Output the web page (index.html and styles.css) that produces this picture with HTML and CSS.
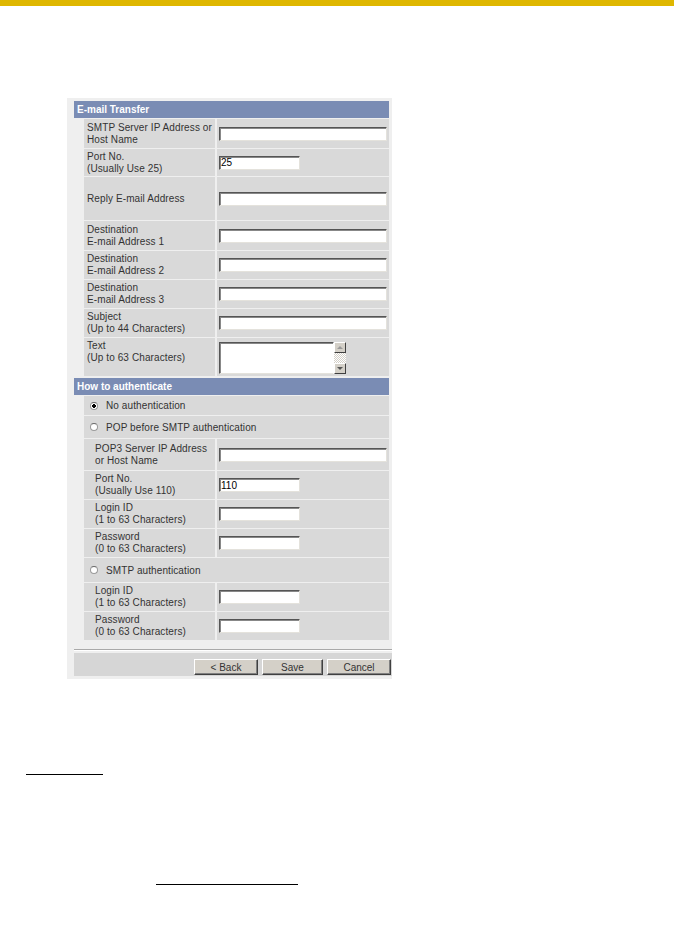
FILE: index.html
```html
<!DOCTYPE html>
<html lang="en">
<head>
  <meta charset="UTF-8" />
  <title>E-mail Transfer</title>
  <link rel="stylesheet" href="styles.css">
</head>
<body>

  <div class="topbar"></div>

  <div class="panel">
    <div class="head">E-mail Transfer</div>
    <div class="rows">
      <div class="row h29"><div class="label">SMTP Server IP Address or<br>Host Name</div><div class="field"><input type="text" class="long" /></div></div>
      <div class="row h27"><div class="label">Port No.<br>(Usually Use 25)</div><div class="field"><input type="text" class="short" value="25" /></div></div>
      <div class="row h43"><div class="label">Reply E-mail Address</div><div class="field"><input type="text" class="long" /></div></div>
      <div class="row h29"><div class="label">Destination<br>E-mail Address 1</div><div class="field"><input type="text" class="long" /></div></div>
      <div class="row"><div class="label">Destination<br>E-mail Address 2</div><div class="field"><input type="text" class="long" /></div></div>
      <div class="row"><div class="label">Destination<br>E-mail Address 3</div><div class="field"><input type="text" class="long" /></div></div>
      <div class="row"><div class="label">Subject<br>(Up to 44 Characters)</div><div class="field"><input type="text" class="long" /></div></div>
      <div class="row h38">
        <div class="label top">Text<br>(Up to 63 Characters)</div>
        <div class="field">
          <div class="memo">
            <textarea></textarea>
            <div class="scroll">
              <span class="arrow up"></span>
              <span class="track"></span>
              <span class="arrow down"></span>
            </div>
          </div>
        </div>
      </div>
    </div>

    <div class="head">How to authenticate</div>
    <div class="rows">
      <div class="row h19 single"><label class="opt"><input type="radio" name="auth" checked /> No authentication</label></div>
      <div class="row h22 single"><label class="opt"><input type="radio" name="auth" /> POP before SMTP authentication</label></div>
      <div class="row h31"><div class="label sub">POP3 Server IP Address<br>or Host Name</div><div class="field"><input type="text" class="long" /></div></div>
      <div class="row"><div class="label sub">Port No.<br>(Usually Use 110)</div><div class="field"><input type="text" class="short" value="110" /></div></div>
      <div class="row"><div class="label sub">Login ID<br>(1 to 63 Characters)</div><div class="field"><input type="text" class="short" /></div></div>
      <div class="row"><div class="label sub">Password<br>(0 to 63 Characters)</div><div class="field"><input type="password" class="short" /></div></div>
      <div class="row h24 single"><label class="opt"><input type="radio" name="auth" /> SMTP authentication</label></div>
      <div class="row"><div class="label sub">Login ID<br>(1 to 63 Characters)</div><div class="field"><input type="text" class="short" /></div></div>
      <div class="row"><div class="label sub">Password<br>(0 to 63 Characters)</div><div class="field"><input type="password" class="short" /></div></div>
    </div>

    <div class="divider"></div>
    <div class="footer">
      <button class="btn back">&lt; Back</button>
      <button class="btn save">Save</button>
      <button class="btn cancel">Cancel</button>
    </div>
  </div>

  <div class="notes">
    <span class="rule first"></span>
    <span class="rule second"></span>
  </div>

</body>
</html>
```

FILE: styles.css
```css
body {
  margin: 0;
  background: #fff;
  font-family: "Liberation Sans", Arial, sans-serif;
  font-size: 10px;
  color: #333;
}

.topbar {
  height: 6px;
  background: #dfb700;
}

.panel {
  width: 315px;
  margin: 92px 0 0 67px;
  padding: 3px 3px 3px 7px;
  background: #efefef;
}

.head {
  height: 17px;
  line-height: 17px;
  padding-left: 3px;
  background: #7a8cb4;
  color: #fff;
  font-weight: bold;
}

.rows {
  margin-left: 10px;
  padding-bottom: 2px;
}

.row {
  display: flex;
  gap: 2px;
  margin-top: 1px;
  height: 28px;
}

.h19 { height: 19px; }
.h22 { height: 22px; }
.h24 { height: 24px; }
.h27 { height: 27px; }
.h29 { height: 29px; }
.h31 { height: 31px; }
.h38 { height: 38px; }
.h43 { height: 43px; }

.label {
  width: 128px;
  padding-left: 3px;
  background: #d9d9d9;
  display: flex;
  align-items: center;
  line-height: 12px;
  letter-spacing: 0.1px;
}

.label.sub {
  width: 120px;
  padding-left: 11px;
}

.label.top {
  align-items: flex-start;
  padding-top: 2px;
  height: 36px;
}

.field {
  flex: 1;
  background: #d9d9d9;
  display: flex;
  align-items: center;
  padding-left: 2px;
}

.single {
  background: #d9d9d9;
  align-items: center;
}

.opt {
  display: flex;
  align-items: center;
  padding-left: 6px;
  color: #333;
  letter-spacing: 0.1px;
}

.opt input {
  appearance: none;
  width: 8px;
  height: 8px;
  margin: 0 8px 0 0;
  border-radius: 50%;
  border: 1px solid #9a9a9a;
  border-top-color: #6a6a6a;
  background: #fff;
}

.opt input:checked {
  background: radial-gradient(circle, #000 0 1.6px, #fff 2px);
}

input[type="text"],
input[type="password"] {
  box-sizing: border-box;
  height: 14px;
  margin: 0;
  padding: 0 1px;
  font-family: "Liberation Sans", Arial, sans-serif;
  font-size: 10px;
  color: #000;
  background: #fff;
  border: 1px solid;
  border-color: #555 #e4e2dc #e4e2dc #555;
  box-shadow: inset 1px 1px 0 #888;
  outline: none;
}

.long { width: 168px; }
.short { width: 81px; }

.memo {
  display: flex;
  height: 32px;
  margin-top: 1px;
}

.memo textarea {
  box-sizing: border-box;
  width: 115px;
  height: 32px;
  margin: 0;
  padding: 0;
  resize: none;
  border: 1px solid;
  border-color: #555 #fff #e4e2dc #555;
  box-shadow: inset 1px 1px 0 #888;
  background: #fff;
  outline: none;
}

.scroll {
  width: 12px;
  display: flex;
  flex-direction: column;
  background: #fff;
}

.scroll .track {
  flex: 1;
  background-color: #e6e6e6;
  background-image: repeating-conic-gradient(#d4d0c8 0 25%, #fff 0 50%);
  background-size: 2px 2px;
}

.arrow {
  height: 11px;
  box-sizing: border-box;
  background: #d4d0c8;
  border: 1px solid;
  border-color: #fff #404040 #404040 #fff;
  position: relative;
}

.arrow::after {
  content: "";
  position: absolute;
  left: 2px;
  top: 3px;
  border-left: 3px solid transparent;
  border-right: 3px solid transparent;
}

.arrow.up::after { border-bottom: 3px solid #999; }
.arrow.down::after { border-top: 3px solid #555; }

.divider {
  margin: 7px -3px 0 0;
  border-top: 1px solid #a9a9a9;
  border-bottom: 1px solid #fff;
}

.footer {
  display: flex;
  justify-content: flex-end;
  gap: 4px;
  height: 23px;
  margin: 2px -3px 0 0;
  padding: 0 1px 1px 0;
  background: #d6d6d6;
  align-items: flex-end;
  box-sizing: border-box;
}

.btn {
  height: 16px;
  padding: 0;
  font-family: "Liberation Sans", Arial, sans-serif;
  font-size: 10px;
  color: #333;
  background: #d4d0c8;
  border: 1px solid;
  border-color: #fff #404040 #404040 #fff;
  box-shadow: inset -1px -1px 0 #808080;
}

.back { width: 64px; }
.save { width: 61px; }
.cancel { width: 64px; }

.notes {
  padding-top: 95px;
}

.rule {
  display: block;
  border-bottom: 1px solid #000;
}

.rule.first {
  width: 77px;
  margin-left: 26px;
}

.rule.second {
  width: 142px;
  margin: 109px 0 0 156px;
}
```
